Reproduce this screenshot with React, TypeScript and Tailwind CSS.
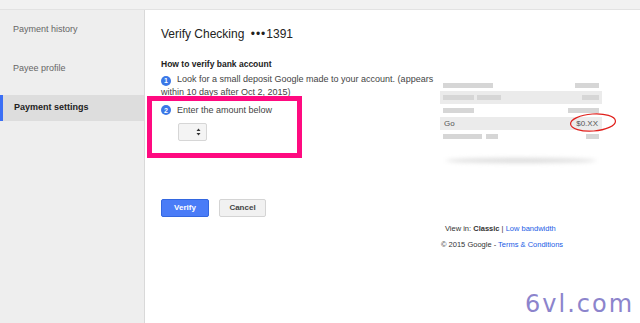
import React from 'react';

const navItems = [
    { label: 'Payment history', active: false },
    { label: 'Payee profile', active: false },
    { label: 'Payment settings', active: true },
];

const StepBadge: React.FC<{ n: number }> = ({ n }) => (
    <span className="inline-flex h-[10px] w-[10px] shrink-0 items-center justify-center rounded-full bg-[#3b78e7] text-[7px] font-bold leading-none text-white">
        {n}
    </span>
);

const Bar: React.FC<{ w: number }> = ({ w }) => (
    <div className="h-[5px] bg-[#d6d6d6]" style={{ width: w }} />
);

const App: React.FC = () => {
    return (
        <div className="relative flex h-[323px] w-[640px] flex-col overflow-hidden bg-white font-['Liberation_Sans',Arial,sans-serif] text-[#333]">
            <div className="h-[10px] shrink-0 border-b border-[#e2e2e2] bg-[#f1f1f1]" />

            <div className="flex flex-1">
                {/* sidebar */}
                <nav className="flex w-[145px] shrink-0 flex-col gap-[13px] border-r border-[#d9d9d9] bg-[#eeeeee] pt-[7px]">
                    {navItems.map((item) => (
                        <div
                            key={item.label}
                            className={
                                item.active
                                    ? 'flex h-[26px] items-center border-l-[3px] border-[#3b6ff5] bg-[#dddddd] pl-[11px] text-[9px] font-bold text-[#222]'
                                    : 'flex h-[26px] items-center pl-[13px] text-[9px] text-[#666]'
                            }
                        >
                            {item.label}
                        </div>
                    ))}
                </nav>

                {/* main */}
                <main className="flex flex-1 pl-[16px]">
                    <div className="flex w-[279px] shrink-0 flex-col">
                        <h1 className="mt-[15px] h-[18px] text-[12px] leading-[18px] text-[#222]">
                            Verify Checking <span className="ml-[3px] tracking-[1px]">•••</span>1391
                        </h1>
                        <h2 className="mt-[15px] text-[8.5px] font-bold leading-[12px] text-[#222]">
                            How to verify bank account
                        </h2>
                        <div className="mt-[3px] flex text-[9px] leading-[12px] text-[#444]">
                            <p>
                                <span className="mr-[6px] inline-block align-[-1px]">
                                    <StepBadge n={1} />
                                </span>
                                Look for a small deposit Google made to your account. (appears within 10 days after Oct 2, 2015)
                            </p>
                        </div>

                        <div className="mt-[-2px] ml-[-14px] h-[62px] w-[155px] border-[5px] border-[#ff0a80] pl-[9px] pt-[3px]">
                            <div className="flex items-center gap-[6px] text-[9px] leading-[12px] text-[#444]">
                                <StepBadge n={2} />
                                Enter the amount below
                            </div>
                            <div className="mt-[7px] ml-[17px] flex h-[18px] w-[29px] items-center justify-end rounded-[2px] border border-[#d6d6d6] bg-[#f4f4f4] pr-[5px]">
                                <svg width="5" height="8" viewBox="0 0 5 8">
                                    <path d="M2.5 0.5 L4.5 3 H0.5 Z M2.5 7.5 L4.5 5 H0.5 Z" fill="#333" />
                                </svg>
                            </div>
                        </div>

                        <div className="mt-[41px] flex gap-[10px]">
                            <button className="h-[18px] w-[48px] rounded-[2px] border border-[#3367e0] bg-[#4a7cf7] text-[8px] font-bold text-white">
                                Verify
                            </button>
                            <button className="h-[18px] w-[47px] rounded-[2px] border border-[#d4d4d4] bg-[#f1f1f1] text-[8px] font-bold text-[#444]">
                                Cancel
                            </button>
                        </div>
                    </div>

                    {/* illustration + footer */}
                    <div className="flex flex-1 flex-col">
                        <div className="relative mt-[70px] w-[162px] text-[8px] text-[#555]">
                            <div className="flex h-[11px] items-center justify-between px-[3px]">
                                <Bar w={50} />
                                <Bar w={24} />
                            </div>
                            <div className="flex h-[13px] items-center justify-between bg-[#ebebeb] px-[3px]">
                                <div className="flex gap-[3px]">
                                    <Bar w={31} />
                                    <Bar w={24} />
                                </div>
                                <Bar w={17} />
                            </div>
                            <div className="flex h-[13px] items-center justify-between px-[3px]">
                                <Bar w={31} />
                                <Bar w={31} />
                            </div>
                            <div className="flex h-[13px] items-center justify-between bg-[#ebebeb] px-[4px]">
                                <span>Go</span>
                                <span>$0.XX</span>
                            </div>
                            <div className="flex h-[12px] items-center justify-between px-[3px]">
                                <div className="flex gap-[4px]">
                                    <Bar w={39} />
                                    <Bar w={12} />
                                </div>
                                <Bar w={13} />
                            </div>
                            <svg
                                className="absolute left-[129px] top-[32px]"
                                width="48"
                                height="21"
                                viewBox="0 0 48 21"
                            >
                                <ellipse cx="24" cy="10.5" rx="22.5" ry="8.5" fill="none" stroke="#e0201c" strokeWidth="1.2" transform="rotate(-4 24 10.5)" />
                            </svg>
                            <div className="mx-auto mt-[16px] h-[5px] w-[150px] rounded-[50%] bg-[#dcdcdc] blur-[2px]" />
                        </div>

                        <div className="mt-[61px] pl-[5px] text-[7.5px] leading-[10px] text-[#333]">
                            View in: <b>Classic</b> | <span className="text-[#1a5ce6]">Low bandwidth</span>
                        </div>
                        <div className="mt-[6px] pl-[1px] text-[7.5px] leading-[10px] text-[#333]">
                            © 2015 Google - <span className="text-[#1a5ce6]">Terms &amp; Conditions</span>
                        </div>
                    </div>
                </main>
            </div>

            <div className="absolute left-[525px] top-[286px] font-['DejaVu_Sans',sans-serif] text-[24px] tracking-[2px] text-[#8c84cc]">
                6vl.com
            </div>
        </div>
    );
};

export default App;
